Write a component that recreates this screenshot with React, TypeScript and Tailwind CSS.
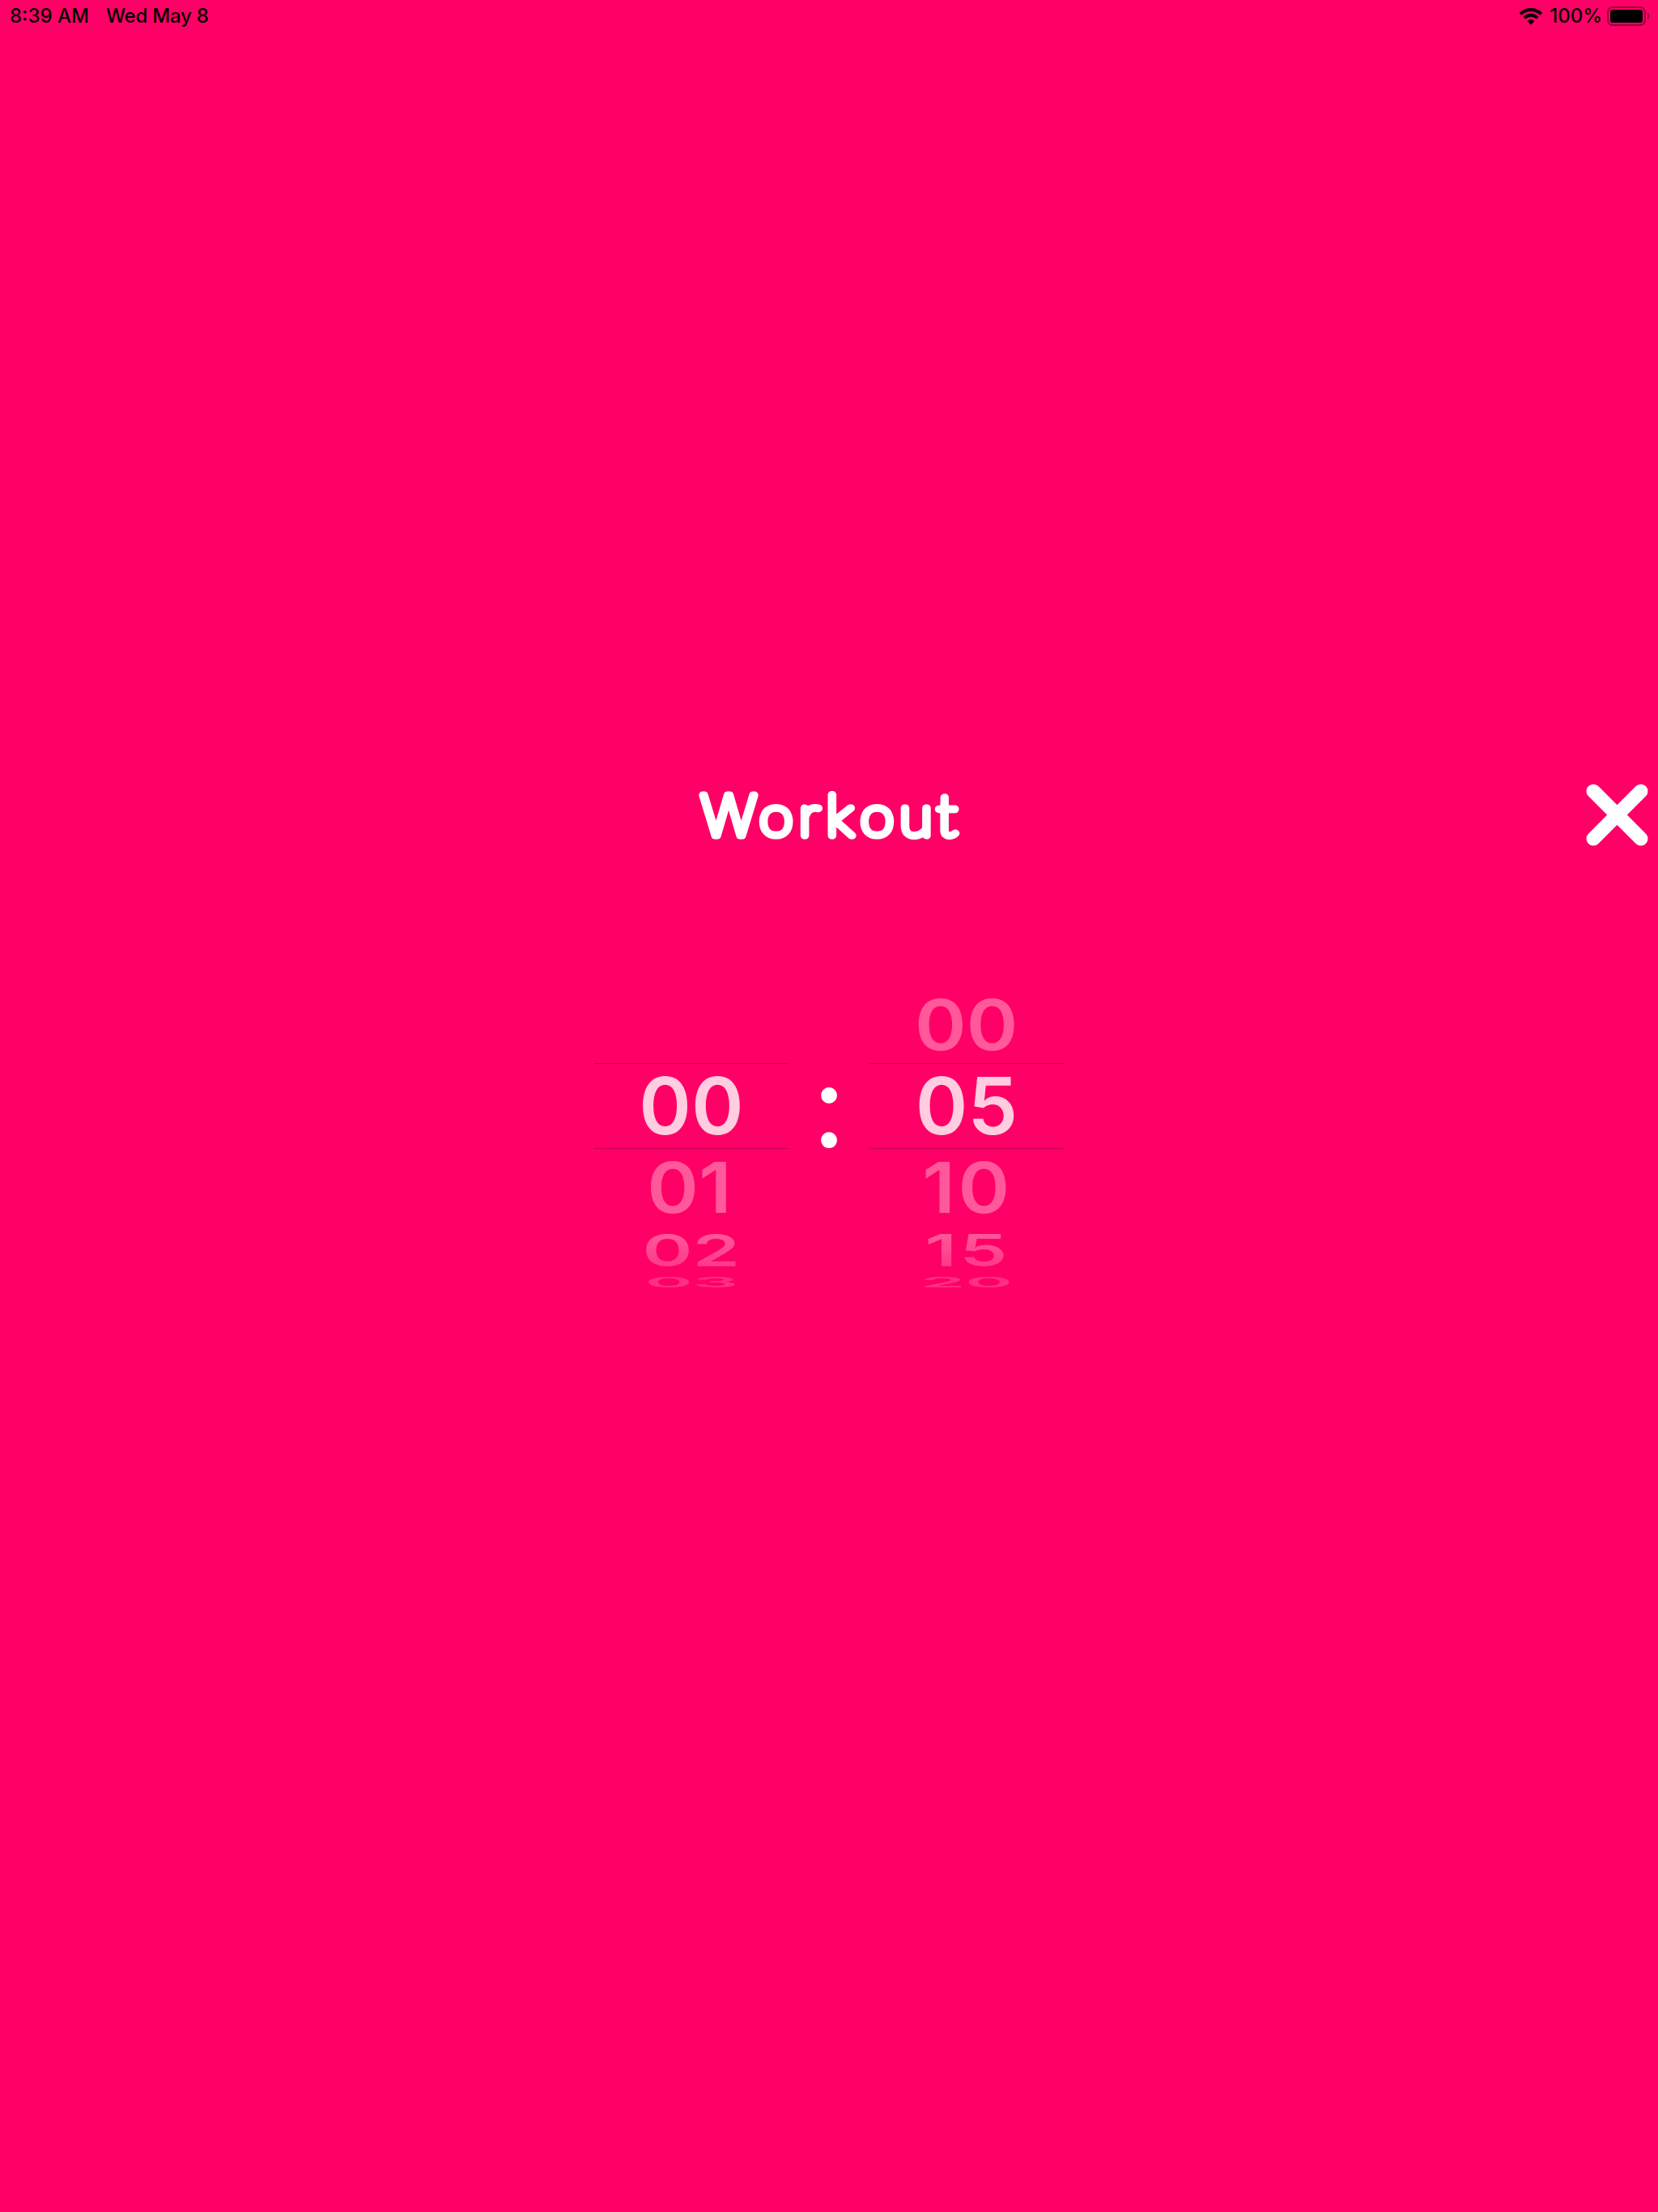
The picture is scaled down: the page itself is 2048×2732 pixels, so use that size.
import clsx from "clsx";

type Row = {
  label: string;
  kind: "previous" | "selected" | "next" | "far" | "last";
  nudge?: string;
};

// the digit 1 is narrow, so its rows get a bit of optical spacing
const minutes: Row[] = [
  { label: "", kind: "previous" },
  { label: "00", kind: "selected" },
  { label: "01", kind: "next", nudge: "-translate-x-[2.5px]" },
  { label: "02", kind: "far" },
  { label: "03", kind: "last" },
];

const seconds: Row[] = [
  { label: "00", kind: "previous" },
  { label: "05", kind: "selected" },
  { label: "10", kind: "next", nudge: "tracking-[3.5px] translate-x-[1.5px]" },
  { label: "15", kind: "far", nudge: "tracking-[3.5px] translate-x-px" },
  { label: "20", kind: "last" },
];

// the wheel gets flatter and fainter towards its edges
const rowStyles = {
  previous: "h-24",
  selected: "h-[106px] border-y border-[#bf0056]",
  next: "h-[95px]",
  far: "h-[59px]",
  last: "h-[21px]",
};

const labelStyles = {
  previous: "translate-y-px scale-x-[0.985] scale-y-[0.88] text-white/35",
  selected: "text-white/80",
  next: "scale-x-[0.985] scale-y-[0.88] text-white/35",
  far: "scale-x-[0.96] scale-y-[0.565] bg-linear-to-b from-white/35 to-white/22 bg-clip-text text-transparent",
  last: "scale-x-[0.91] scale-y-[0.173] text-white/18",
};

function StatusBar() {
  return (
    <header className="flex h-10 items-center justify-between pl-3 pr-[9px] font-['Inter',sans-serif] text-2xl font-medium text-black">
      <div className="flex gap-[21px] whitespace-nowrap">
        <span>8:39 AM</span>
        <span className="tracking-[-0.2px]">Wed May 8</span>
      </div>
      <div className="flex items-center">
        <svg width="28" height="21" viewBox="0 0 28 21" className="mr-[9px]" fill="none" stroke="black" strokeWidth="3.9">
          <path d="M1.1 7.4a18.2 18.2 0 0 1 25.8 0" />
          <path d="M5.9 12.2a11.4 11.4 0 0 1 16.2 0" />
          <path d="M14.6 19.9a.9.9 0 0 1-1.2 0l-3.9-4a6.3 6.3 0 0 1 9 0z" fill="black" stroke="none" />
        </svg>
        <span>100%</span>
        <svg width="54" height="24" viewBox="0 0 54 24" className="ml-[6px]">
          <rect x="1" y="1" width="46" height="22" rx="6" fill="none" stroke="black" strokeOpacity="0.4" strokeWidth="2" />
          <rect x="4" y="4" width="40" height="16" rx="3" fill="black" />
          <path d="M50 8c3.4 1 3.4 7 0 8z" fill="black" fillOpacity="0.4" />
        </svg>
      </div>
    </header>
  );
}

// Hairline letters with a thick round stroke give the rounded heading face
function Title() {
  return (
    <svg width="328" height="100" viewBox="0 0 328 100" role="heading" aria-level={1}>
      <text
        transform="scale(1.07 1)"
        x="5.4 72.9"
        y="76.3"
        dx="0 0 3 3.5 6.4 2.7 1.2"
        className="fill-white stroke-white font-['Lato',sans-serif] text-[70px] font-thin tracking-[4px]"
        strokeWidth="9"
        strokeLinejoin="round"
      >
        <tspan className="font-['Inter',sans-serif] text-[69px]">W</tspan>orkout
      </text>
    </svg>
  );
}

function Wheel({ rows }: { rows: Row[] }) {
  return (
    <div className="flex w-60 flex-col">
      {rows.map((row) => (
        <div key={row.kind} className={clsx("flex items-center justify-center", rowStyles[row.kind])}>
          <span className={clsx("shrink-0 text-[98px] leading-[76px]", labelStyles[row.kind], row.nudge)}>
            {row.label}
          </span>
        </div>
      ))}
    </div>
  );
}

export default function App() {
  return (
    <div className="flex h-[2732px] w-[2048px] flex-col overflow-hidden bg-[#ff0066]">
      <StatusBar />

      <main className="flex flex-col pt-[916px]">
        <div className="grid h-[100px] grid-cols-[1fr_auto_1fr] items-center px-3">
          <div className="col-start-2">
            <Title />
          </div>
          <button aria-label="Close" className="justify-self-end">
            <svg width="77" height="77" viewBox="0 0 77 77" stroke="white" strokeWidth="17.4" strokeLinecap="round">
              <path d="M9.2 9.2l58.6 58.6M67.8 9.2L9.2 67.8" />
            </svg>
          </button>
        </div>

        {/* Time picker */}
        <div className="mt-[161px] flex justify-center font-['Inter',sans-serif] font-semibold">
          <Wheel rows={minutes} />
          <div className="flex w-[100px] justify-center pt-[66px] font-['Lato',sans-serif] text-[149px] font-medium leading-[154px] text-white">
            :
          </div>
          <Wheel rows={seconds} />
        </div>
      </main>
    </div>
  );
}
